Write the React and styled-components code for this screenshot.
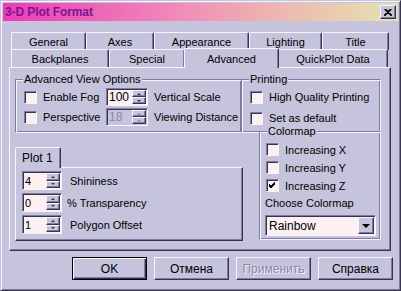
import React from 'react'
import styled, { createGlobalStyle, css } from 'styled-components'

const c = {
  face: '#c6c3dd',
  light: '#f6f4fc',
  shadow: '#7e7aa2',
  dark: '#36344e',
  field: '#fcf0f0',
  text: '#000000',
  muted: '#8a87a8',
}

const GlobalStyle = createGlobalStyle`
  html, body { margin: 0; padding: 0; background: ${c.face}; }
  body {
    font-family: "Liberation Sans", Arial, sans-serif;
    font-size: 11px;
    color: ${c.text};
  }
  * { box-sizing: border-box; }
`

const raised = css`
  border: 1px solid;
  border-color: ${c.light} ${c.dark} ${c.dark} ${c.light};
  box-shadow: inset -1px -1px 0 ${c.shadow};
`

const sunken = css`
  border: 1px solid;
  border-color: ${c.shadow} ${c.light} ${c.light} ${c.shadow};
  box-shadow: inset 1px 1px 0 ${c.dark};
`

const Window = styled.div`
  width: 401px;
  height: 291px;
  background: ${c.face};
  border: 1px solid;
  border-color: ${c.face} ${c.dark} ${c.dark} ${c.face};
  box-shadow: inset 1px 1px 0 ${c.light}, inset -1px -1px 0 ${c.shadow};
  padding: 2px;
  display: flex;
  flex-direction: column;
`

const TitleBar = styled.div`
  height: 18px;
  background: linear-gradient(to right, #ec3cb8, #f08cb8 45%, #ecb8b0 70%, #e6e2b2);
  display: flex;
  align-items: center;
  justify-content: space-between;
  padding: 0 2px 0 2px;
`

const Title = styled.span`
  font-weight: bold;
  font-size: 12px;
  color: #7c1490;
  letter-spacing: -0.1px;
`

const CloseButton = styled.div`
  width: 16px;
  height: 14px;
  background: ${c.face};
  ${raised};
  display: flex;
  align-items: center;
  justify-content: center;
`

const Body = styled.div`
  padding: 11px 0 0 6px;
  display: flex;
  flex-direction: column;
`

const TabStrip = styled.div`
  margin-left: 2px;
  display: flex;
  flex-direction: column;
  position: relative;
  z-index: 1;
`

const TabRow = styled.div`
  display: flex;
  height: ${p => p.$h}px;
  align-items: flex-end;
`

const Tab = styled.div`
  width: ${p => p.$w}px;
  height: ${p => (p.$active ? 20 : 18)}px;
  margin: ${p => (p.$active ? '0 -1px -1px -1px' : '0')};
  background: ${c.face};
  border: 1px solid;
  border-bottom: none;
  border-color: ${c.light} ${c.dark} ${c.dark} ${c.light};
  border-radius: 2px 2px 0 0;
  box-shadow: inset -1px 0 0 ${c.shadow};
  display: flex;
  align-items: center;
  justify-content: center;
  padding-top: ${p => (p.$active ? 0 : 1)}px;
  position: relative;
  z-index: ${p => (p.$active ? 2 : 1)};
`

const Panel = styled.div`
  width: 382px;
  height: 184px;
  background: ${c.face};
  ${raised};
  padding: 11px 0 0 5px;
  display: flex;
`

const Column = styled.div`
  display: flex;
  flex-direction: column;
  width: ${p => (p.$w ? `${p.$w}px` : 'auto')};
  margin-left: ${p => p.$ml || 0}px;
`

const Group = styled.div`
  position: relative;
  width: ${p => p.$w}px;
  height: ${p => p.$h}px;
  margin-left: ${p => p.$ml || 0}px;
  margin-top: ${p => p.$mt || 0}px;
  border: 1px solid;
  border-color: ${c.shadow} ${c.light} ${c.light} ${c.shadow};
  box-shadow: inset 1px 1px 0 ${c.light}, inset -1px -1px 0 ${c.shadow};
`

const Legend = styled.span`
  position: absolute;
  top: -8px;
  left: 7px;
  padding: 0 1px;
  background: ${c.face};
  line-height: 14px;
`

const Grid = styled.div`
  display: grid;
  grid-template-columns: ${p => p.$cols};
  grid-auto-rows: ${p => p.$row}px;
  row-gap: ${p => p.$gap}px;
  align-items: center;
  padding: ${p => p.$pad};
`

const Check = styled.label`
  display: flex;
  align-items: center;
  gap: 6px;
  white-space: nowrap;
`

const Box = styled.span`
  width: 13px;
  height: 13px;
  background: ${c.field};
  ${sunken};
  display: flex;
  align-items: center;
  justify-content: center;
  flex: none;
`

const Spin = styled.div`
  width: ${p => p.$w}px;
  height: ${p => p.$h}px;
  ${sunken};
  background: ${p => (p.$disabled ? c.face : c.field)};
  color: ${p => (p.$disabled ? c.muted : c.text)};
  display: flex;
  font-size: ${p => p.$fs || 11}px;
`

const SpinText = styled.span`
  flex: 1;
  padding: 0 0 0 2px;
  display: flex;
  align-items: center;
`

const Arrows = styled.div`
  width: 15px;
  display: flex;
  flex-direction: column;
  padding: 1px 1px 1px 0;
`

const Arrow = styled.div`
  flex: 1;
  background: ${c.face};
  ${raised};
  display: flex;
  align-items: center;
  justify-content: center;
  &::after {
    content: '';
    border-left: 2px solid transparent;
    border-right: 2px solid transparent;
    ${p =>
      p.$down
        ? `border-top: 2px solid ${p.$disabled ? c.muted : c.dark};`
        : `border-bottom: 2px solid ${p.$disabled ? c.muted : c.dark};`}
  }
`

const Label = styled.span`
  white-space: nowrap;
  padding-left: ${p => p.$pl || 0}px;
`

const PlotTab = styled.div`
  width: 46px;
  height: 21px;
  margin-top: 14px;
  margin-bottom: -1px;
  background: ${c.face};
  border: 1px solid;
  border-bottom: none;
  border-color: ${c.light} ${c.dark} ${c.dark} ${c.light};
  border-radius: 2px 2px 0 0;
  box-shadow: inset -1px 0 0 ${c.shadow};
  display: flex;
  align-items: center;
  padding-left: 6px;
  position: relative;
  z-index: 1;
  font-size: 12px;
`

const PlotBox = styled.div`
  width: 228px;
  height: 74px;
  ${raised};
  padding: 3px 0 0 6px;
  display: grid;
  grid-template-columns: 40px auto;
  grid-auto-rows: 19px;
  row-gap: 3px;
  column-gap: 5px;
  align-items: center;
`

const ColorLabel = styled.div`
  margin: 3px 0 5px 0;
  line-height: 13px;
`

const Select = styled.div`
  width: 111px;
  height: 21px;
  ${sunken};
  background: ${c.field};
  display: flex;
  align-items: center;
  justify-content: space-between;
  padding: 1px 1px 1px 3px;
  font-size: 12px;
`

const DropButton = styled.div`
  width: 16px;
  height: 17px;
  background: ${c.face};
  ${raised};
  display: flex;
  align-items: center;
  justify-content: center;
  &::after {
    content: '';
    border-left: 4px solid transparent;
    border-right: 4px solid transparent;
    border-top: 4px solid ${c.text};
    margin-top: 1px;
  }
`

const Footer = styled.div`
  display: flex;
  justify-content: flex-end;
  gap: 7px;
  padding: 6px 5px 0 0;
`

const Button = styled.div`
  width: 75px;
  height: 23px;
  background: ${c.face};
  display: flex;
  align-items: center;
  justify-content: center;
  font-size: 12px;
  ${p =>
    p.$default
      ? css`
          border: 1px solid #000;
          box-shadow: inset 1px 1px 0 ${c.light}, inset -1px -1px 0 ${c.dark}, inset -2px -2px 0 ${c.shadow};
        `
      : raised};
  ${p =>
    p.$disabled &&
    css`
      color: ${c.muted};
      text-shadow: 1px 1px 0 ${c.light};
    `}
`

const CheckBox = ({ checked, children }) => (
  <Check>
    <Box>
      {checked && (
        <svg width="7" height="7" viewBox="0 0 7 7">
          <path d="M0 3 L2 5 L6 1 M0 4 L2 6 L6 2 M0 2 L2 4 L6 0" stroke="#000" fill="none" strokeWidth="1" />
        </svg>
      )}
    </Box>
    {children}
  </Check>
)

const Spinner = ({ value, w = 40, h = 19, disabled, fs }) => (
  <Spin $w={w} $h={h} $disabled={disabled} $fs={fs}>
    <SpinText>{value}</SpinText>
    <Arrows>
      <Arrow $disabled={disabled} />
      <Arrow $down $disabled={disabled} />
    </Arrows>
  </Spin>
)

const backTabs = [
  ['General', 75],
  ['Axes', 68],
  ['Appearance', 95],
  ['Lighting', 73],
  ['Title', 67],
]

const frontTabs = [
  ['Backplanes', 98],
  ['Special', 76],
  ['Advanced', 95],
  ['QuickPlot Data', 110],
]

const App = () => {
  return (
    <>
      <GlobalStyle />
      <Window>
        <TitleBar>
          <Title>3-D Plot Format</Title>
          <CloseButton>
            <svg width="8" height="7" viewBox="0 0 8 7">
              <path d="M0.5 0 L7.5 7 M1.5 0 L8 6.5 M7.5 0 L0.5 7 M6.5 0 L0 6.5" stroke="#000" strokeWidth="1.1" />
            </svg>
          </CloseButton>
        </TitleBar>
        <Body>
          <TabStrip>
            <TabRow $h={18}>
              {backTabs.map(([name, w]) => (
                <Tab key={name} $w={w}>{name}</Tab>
              ))}
            </TabRow>
            <TabRow $h={17}>
              {frontTabs.map(([name, w]) => (
                <Tab key={name} $w={w} $active={name === 'Advanced'}>{name}</Tab>
              ))}
            </TabRow>
          </TabStrip>
          <Panel>
            <Column $w={228}>
              <Group $w={227} $h={54}>
                <Legend>Advanced View Options</Legend>
                <Grid $cols="82px 48px auto" $row={18} $gap={2} $pad="8px 0 0 8px">
                  <CheckBox>Enable Fog</CheckBox>
                  <Spinner value="100" w={42} h={18} fs={12} />
                  <Label>Vertical Scale</Label>
                  <CheckBox>Perspective</CheckBox>
                  <Spinner value="18" w={42} h={18} fs={12} disabled />
                  <Label>Viewing Distance</Label>
                </Grid>
              </Group>
              <PlotTab>Plot 1</PlotTab>
              <PlotBox>
                <Spinner value="4" />
                <Label $pl={3}>Shininess</Label>
                <Spinner value="0" />
                <Label>% Transparency</Label>
                <Spinner value="1" />
                <Label $pl={3}>Polygon Offset</Label>
              </PlotBox>
            </Column>
            <Column $w={139} $ml={-2}>
              <Group $w={140} $h={54}>
                <Legend>Printing</Legend>
                <Grid $cols="auto" $row={18} $gap={3} $pad="8px 0 0 8px">
                  <CheckBox>High Quality Printing</CheckBox>
                  <CheckBox>Set as default</CheckBox>
                </Grid>
              </Group>
              <Group $w={122} $h={109} $ml={18} $mt={-2}>
                <Legend>Colormap</Legend>
                <Grid $cols="auto" $row={17} $gap={1} $pad="9px 0 0 6px">
                  <CheckBox>Increasing X</CheckBox>
                  <CheckBox>Increasing Y</CheckBox>
                  <CheckBox checked>Increasing Z</CheckBox>
                </Grid>
                <Column $ml={5}>
                  <ColorLabel>Choose Colormap</ColorLabel>
                  <Select>
                    Rainbow
                    <DropButton />
                  </Select>
                </Column>
              </Group>
            </Column>
          </Panel>
          <Footer>
            <Button $default>OK</Button>
            <Button>Отмена</Button>
            <Button $disabled>Применить</Button>
            <Button>Справка</Button>
          </Footer>
        </Body>
      </Window>
    </>
  )
}

export default App
